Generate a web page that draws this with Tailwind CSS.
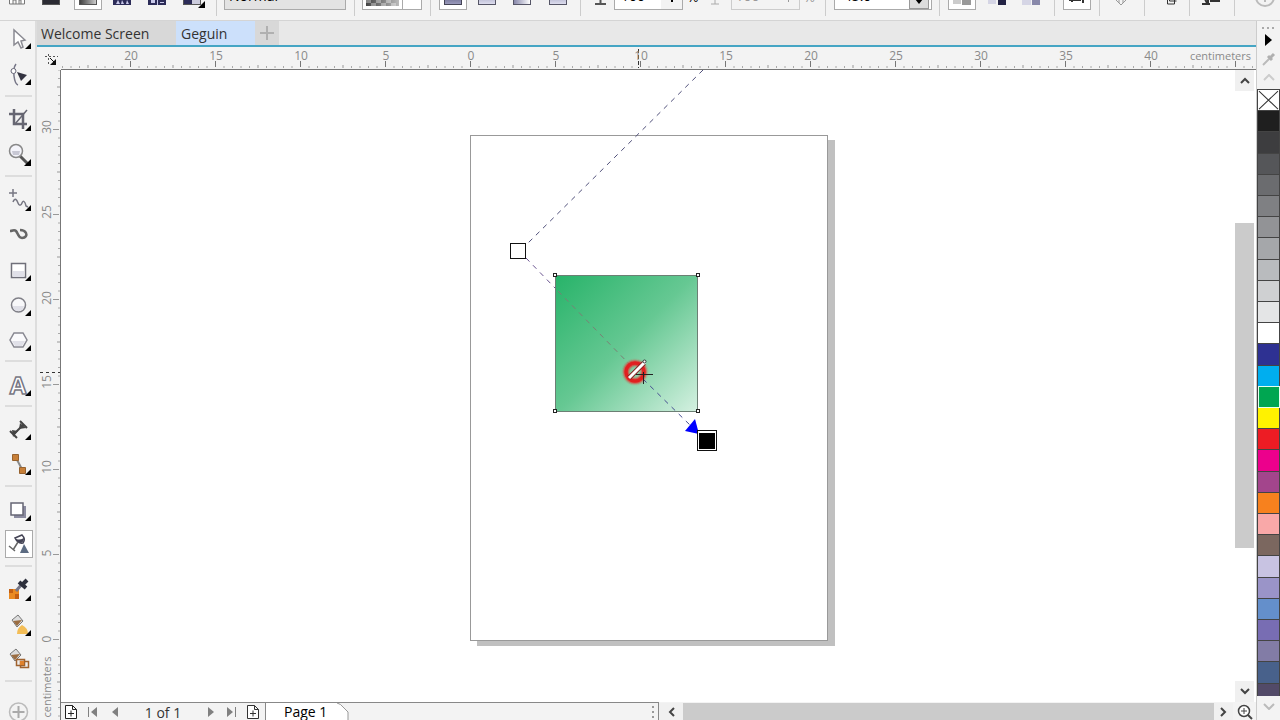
<!DOCTYPE html>
<html lang="en">
<head>
    <meta charset="UTF-8">
    <meta name="viewport" content="width=device-width, initial-scale=1.0">
    <title>Geguin - Drawing Editor</title>
    <script src="https://cdn.jsdelivr.net/npm/@tailwindcss/browser@4"></script>
</head>
<body class="h-screen flex flex-col overflow-hidden bg-[#f3f3f3] text-[#333] text-sm font-['Open_Sans','Noto_Sans',sans-serif]">

    <!-- Property bar, scrolled partly out of view -->
    <header class="h-[21px] shrink-0 overflow-hidden border-b border-[#d4d4d4] flex items-end pb-1">
        <button aria-label="Edit" class="ml-2 mb-[11px]">
            <svg class="block" width="18" height="16"><path d="M1.500 1v14h15V1M5 15v-4h3v4M11 15v-4h2v4" fill="#fff" stroke="#777"/></svg>
        </button>
        <button aria-label="No transparency" class="ml-4 mb-[11px] w-[18px] h-4 bg-[#2b2b33] border border-[#555]"></button>
        <button aria-label="Uniform" class="ml-[14px] mb-1.5 w-[28px] h-6 bg-white border border-[#aaa] px-1 pb-1 flex items-end">
            <span class="block w-[18px] h-4 border border-[#555] bg-linear-to-r from-[#444] to-[#ccc]"></span>
        </button>
        <button aria-label="Vector pattern" class="ml-[11px] mb-[11px]">
            <svg class="block" width="18" height="16"><rect width="18" height="16" fill="#2c2c58"/><path d="M3 15l2-4 2 4zM8 15l1-4 2 4zM13 15l1-4 2 4z" fill="#c9c9ea"/></svg>
        </button>
        <button aria-label="Bitmap pattern" class="ml-[17px] mb-[11px]">
            <svg class="block" width="18" height="16"><rect width="18" height="16" fill="#2c2c58"/><path d="M3 11h4v3H3zM9 11h1v5H9zM12 13h4v1h-4z" fill="#c9c9ea"/></svg>
        </button>
        <button aria-label="Two-color pattern" class="ml-[17px] mb-2">
            <svg class="block" width="22" height="19"><rect x=".5" width="17" height="15.500" fill="#2c2c58" stroke="#555"/><path d="M9 8h8v7H9z" fill="#ccd"/><path d="M22 12v7h-7z"/></svg>
        </button>
        <span class="ml-[11px] w-px h-6 bg-[#ccc]"></span>
        <select aria-label="Merge mode" class="ml-[7px] mb-1.5 w-[122px] h-6 px-1 pb-1 appearance-none bg-[#e3e3e3] border border-[#aaa] text-black text-sm leading-4">
            <option>Normal</option>
        </select>
        <span class="ml-2 w-px h-6 bg-[#ccc]"></span>
        <button aria-label="Transparency picker" class="ml-[7px] mb-1.5 w-[60px] h-6 bg-white border border-[#aaa] flex items-end">
            <svg class="block mb-[3px] ml-[3px]" width="34" height="16">
                <defs><linearGradient id="fade"><stop stop-color="#444"/><stop offset="1" stop-color="#bbb"/></linearGradient></defs>
                <rect width="33" height="16" fill="url(#fade)"/>
                <path d="M5 13h5v3H5zM15 13h5v3h-5zM25 13h5v3h-5zM0 9h5v4H0zM10 9h5v4h-5zM20 9h5v4h-5z" fill="#fff" fill-opacity=".35"/>
            </svg>
            <span class="ml-[2px] w-px h-full bg-[#aaa]"></span>
        </button>
        <span class="ml-2 w-px h-6 bg-[#ccc]"></span>
        <button aria-label="Linear" class="ml-2 mb-1.5 w-[28px] h-6 bg-white border border-[#aaa] px-1 pb-1 flex items-end">
            <span class="block w-[18px] h-4 border border-[#445] bg-linear-to-b from-[#446] to-[#99b]"></span>
        </button>
        <button aria-label="Elliptical" class="ml-[11px] mb-[11px] w-[18px] h-4 border border-[#556] bg-linear-to-b from-[#88a] to-[#dde]"></button>
        <button aria-label="Conical" class="ml-[17px] mb-[11px] w-[18px] h-4 border border-[#556] bg-linear-to-r from-[#88a] to-white"></button>
        <button aria-label="Rectangular" class="ml-[18px] mb-[11px] w-[18px] h-4 border border-[#556] bg-linear-to-b from-[#88a] to-[#dde]"></button>
        <span class="ml-[13px] w-px h-6 bg-[#ccc]"></span>
        <svg class="ml-[14px] mb-[11px]" width="11" height="14"><path d="M5.500 0v13M0 13h11" stroke="#555" stroke-width="2"/></svg>
        <div class="ml-2 mb-1.5 w-[69px] h-6 shrink-0 bg-white border border-[#aaa] flex">
            <input aria-label="Node transparency" value="100" class="w-[46px] pl-[6px] pb-1 text-black text-sm leading-4">
            <span class="w-[21px] bg-[#f3f3f3] flex items-end justify-center pb-[7px]"><span class="w-[2px] h-4 bg-black"></span></span>
        </div>
        <span class="ml-1 mb-[11px] leading-4 text-black">%</span>
        <svg class="ml-3 mb-[11px]" width="8" height="14"><path d="M0 13h8M4 0v13" stroke="#aaa"/></svg>
        <div class="ml-3 mb-1.5 w-[69px] h-6 shrink-0 border border-[#ccc] flex">
            <input aria-label="Midpoint transparency" value="100" disabled class="w-[46px] pl-1 pb-1 text-[#999] text-sm leading-4">
            <span class="w-[21px] flex items-end justify-center pb-[7px]"><span class="w-px h-4 bg-[#999]"></span></span>
        </div>
        <span class="ml-1 mb-[11px] leading-4 text-[#999]">%</span>
        <span class="ml-[10px] w-px h-6 bg-[#ccc]"></span>
        <div class="ml-2 mb-1.5 w-[98px] h-6 bg-white border border-[#aaa] flex">
            <input aria-label="Rotation angle" value="-45.0" class="w-[74px] pl-1 pb-1 text-black text-sm leading-4">
            <button aria-label="Change angle" class="w-5 border border-[#999] bg-[#ddd] flex items-end justify-center pb-1">
                <svg width="8" height="6"><path d="M0 1h8L4 6z"/></svg>
            </button>
        </div>
        <span class="ml-[7px] w-px h-6 bg-[#ccc]"></span>
        <button aria-label="Transparency target all" class="ml-2 mb-1.5 w-[28px] h-6 bg-white border border-[#aaa] px-1 pb-1 flex items-end">
            <svg width="18" height="16"><path d="M0 8h8v7H0z" fill="#ccc"/><path d="M9 6h9v10H9z" fill="#999"/></svg>
        </button>
        <button aria-label="Fill target" class="ml-3 mb-[11px]">
            <svg class="block" width="18" height="16"><path d="M0 8h8v7H0z" fill="#d5d5e5"/><path d="M10 6h8v10h-8z" fill="#224"/></svg>
        </button>
        <button aria-label="Outline target" class="ml-4 mb-[11px]">
            <svg class="block" width="19" height="16"><path d="M0 8h9v8H0z" fill="#d5d5e5"/><path d="M10 6h8v10h-8z" fill="#88a"/></svg>
        </button>
        <span class="ml-[13px] w-px h-6 bg-[#ccc]"></span>
        <button aria-label="Free scale and skew" class="ml-2 mb-1.5 w-[28px] h-6 bg-white border border-[#aaa] px-1 pb-1.5 flex items-end">
            <svg width="18" height="12"><path d="M1 9h12M4 7v4M15 5v7" stroke="#333" stroke-width="2"/></svg>
        </button>
        <span class="ml-2 w-px h-6 bg-[#ccc]"></span>
        <svg class="ml-[15px] mb-[11px]" width="12" height="12"><path d="M1 7l5 5 5-5M4 6v4M8 6v4" fill="none" stroke="#999"/></svg>
        <span class="ml-[17px] w-px h-6 bg-[#ccc]"></span>
        <button aria-label="Copy transparency" class="ml-[21px] mb-[11px]">
            <svg class="block" width="11" height="14"><path d="M3.500 0v10h7M1.500 0v13h7V3" fill="none" stroke="#333"/></svg>
        </button>
        <span class="ml-3 w-px h-6 bg-[#ccc]"></span>
        <button aria-label="Freeze transparency" class="ml-3 mb-[11px]">
            <svg class="block" width="18" height="14"><path d="M0 13h8M8 10h10M3 8l2 4M6 6v7" stroke="#333" stroke-width="2"/></svg>
        </button>
        <span class="ml-[14px] w-px h-6 bg-[#ccc]"></span>
        <button aria-label="Customize" class="ml-5 mb-[9px]">
            <svg class="block" width="20" height="20"><circle cx="10" cy="10" r="9" fill="none" stroke="#bbb" stroke-width="2"/><path d="M10 5v10M5 10h10" stroke="#bbb" stroke-width="2"/></svg>
        </button>
    </header>

    <div class="flex-1 min-h-0 flex">

        <!-- Toolbox -->
        <nav aria-label="Toolbox" class="w-[37px] shrink-0 border-r-2 border-[#ddd] flex flex-col overflow-hidden">
            <button aria-label="Pick" class="h-[35px] shrink-0">
                <svg class="block" width="36" height="35"><path d="M14 9v15l4-3 3 6 2-1-2-6 4-1z" fill="#fff" stroke="#8a8a92" stroke-width="1.500"/><path d="M31 22v6h-6z"/></svg>
            </button>
            <button aria-label="Shape" class="h-[35px] shrink-0">
                <svg class="block" width="36" height="35"><path d="M16 8q-3 4-2 12t4 9" fill="none" stroke="#778" stroke-width="1.500"/><circle cx="13.500" cy="15" r="2.500" fill="#fff" stroke="#667"/><path d="M17 16l10 3-6 6z" fill="#333340"/><path d="M31 23v6h-6z"/></svg>
            </button>
            <span class="my-1 ml-[5px] w-[27px] h-[2px] shrink-0 bg-[#ddd]"></span>
            <button aria-label="Crop" class="h-[35px] shrink-0">
                <svg class="block" width="36" height="35"><path d="M14 8v15h13M9 13h14v15" fill="none" stroke="#666672" stroke-width="2.500"/><path d="M15 23L27 9" stroke="#666672" stroke-width="1.500"/><path d="M31 24v6h-6z"/></svg>
            </button>
            <button aria-label="Zoom" class="h-[35px] shrink-0">
                <svg class="block" width="36" height="35"><path d="M20 20l8 8" stroke="#555" stroke-width="3"/><circle cx="16" cy="15" r="6.500" fill="#f4f4fa" stroke="#888" stroke-width="1.500"/><path d="M12 15h8l-1 4h-6z" fill="#c8c8d4"/><path d="M31 23v7h-7z"/></svg>
            </button>
            <span class="my-1 ml-[5px] w-[27px] h-[2px] shrink-0 bg-[#ddd]"></span>
            <button aria-label="Freehand" class="h-[35px] shrink-0">
                <svg class="block" width="36" height="35"><path d="M13 8v8M9 12h8M13 21c2-5 4-2 5 1s3 3 4 0 3-2 4 3l2 1" fill="none" stroke="#777783" stroke-width="1.500"/><path d="M31 24v6h-6z"/></svg>
            </button>
            <button aria-label="Artistic media" class="h-[35px] shrink-0">
                <svg class="block" width="36" height="35"><path d="M10 15c3 0 4-2 6 0s2 7 6 7 5-3 4-5-4-3-6-3" fill="none" stroke="#666" stroke-width="2.500"/></svg>
            </button>
            <button aria-label="Rectangle" class="h-[35px] shrink-0">
                <svg class="block" width="36" height="35"><rect x="11.500" y="12.500" width="14" height="14" fill="#fff" stroke="#70707a" stroke-width="1.500"/><path d="M13 20h11v6H13z" fill="#e0e0e8"/><path d="M31 24v6h-6z"/></svg>
            </button>
            <button aria-label="Ellipse" class="h-[35px] shrink-0">
                <svg class="block" width="36" height="35"><circle cx="18.500" cy="19" r="7" fill="#f8f8fa" stroke="#808088" stroke-width="1.500"/><path d="M13 20h11q-1 5-6 5t-5-5" fill="#e0e0e8"/><path d="M31 24v6h-6z"/></svg>
            </button>
            <button aria-label="Polygon" class="h-[35px] shrink-0">
                <svg class="block" width="36" height="35"><path d="M14 12h9l4 7-4 7h-9l-4-7z" fill="#fafafc" stroke="#888891" stroke-width="1.500"/><path d="M12 20h13l-3 5h-7z" fill="#e0e0e8"/><path d="M31 24v6h-6z"/></svg>
            </button>
            <span class="my-1 ml-[5px] w-[27px] h-[2px] shrink-0 bg-[#ddd]"></span>
            <button aria-label="Text" class="h-[35px] shrink-0">
                <svg class="block" width="36" height="35"><text x="18" y="28" text-anchor="middle" font-size="24" font-weight="700" fill="#fff" stroke="#777784" stroke-width="1.500">A</text><path d="M31 24v6h-6z"/></svg>
            </button>
            <span class="my-1 ml-[5px] w-[27px] h-[2px] shrink-0 bg-[#ddd]"></span>
            <button aria-label="Dimension" class="h-[35px] shrink-0">
                <svg class="block" width="36" height="35"><path d="M13 24L24 13M10 20l7 7M20 10l7 7" stroke="#444" stroke-width="2"/><path d="M12 19l6 1-5 6zM20 12l6 5-7 1z" fill="#444"/><path d="M31 23v6h-6z"/></svg>
            </button>
            <button aria-label="Connector" class="h-[35px] shrink-0">
                <svg class="block" width="36" height="35"><path d="M16 12l7 13" stroke="#8a8a8a" stroke-width="2"/><path d="M12.500 8.500h6v6h-6zM19.500 21.500h6v6h-6z" fill="#c77f38" stroke="#96622f"/><path d="M31 23v6h-6z"/></svg>
            </button>
            <span class="my-1 ml-[5px] w-[27px] h-[2px] shrink-0 bg-[#ddd]"></span>
            <button aria-label="Drop shadow" class="h-[35px] shrink-0">
                <svg class="block" width="36" height="35"><path d="M14 15h12v12H14z" fill="#8b8ba0"/><rect x="11" y="12" width="12" height="12" fill="#fff" stroke="#666674" stroke-width="1.500"/><path d="M31 24v6h-6z"/></svg>
            </button>
            <button aria-label="Transparency" aria-pressed="true" class="h-[35px] shrink-0">
                <svg class="block" width="36" height="35"><rect x="5.500" y="4.500" width="27" height="27" fill="#fff" stroke="#aaa"/><path d="M15 12l7-3q4 4 1 8-5 1-8-5z" fill="#fff" stroke="#445" stroke-width="1.500"/><path d="M15 12q3 3 9 0 0 4-3 5-4 0-6-5" fill="#445"/><path d="M18 16l-5 8M9 20l6 5" stroke="#666" stroke-width="1.500"/><path d="M24 18l5 9h-9z" fill="#5c6b82"/></svg>
            </button>
            <span class="my-1 ml-[5px] w-[27px] h-[2px] shrink-0 bg-[#ddd]"></span>
            <button aria-label="Color eyedropper" class="h-[35px] shrink-0">
                <svg class="block" width="36" height="35"><path d="M9 18h10v10H9z" fill="#ea8a22"/><path d="M9 18h4v4H9zM15 23h4v5h-4z" fill="#c35f12"/><path d="M16 20l6-7" stroke="#778" stroke-width="3"/><path d="M19 11l7 6M22 14l5-5" stroke="#2d2f3c" stroke-width="4"/><path d="M31 24v6h-6z"/></svg>
            </button>
            <button aria-label="Interactive fill" class="h-[35px] shrink-0">
                <svg class="block" width="36" height="35"><path d="M12 14l6-5 5 6-6 6z" fill="#ddd" stroke="#777"/><path d="M13 15l9-1-5 6z" fill="#9a6d42"/><path d="M22 19q6 3 6 9H17q0-6 5-9z" fill="#f3bd56"/><path d="M31 24v6h-6z"/></svg>
            </button>
            <button aria-label="Smart fill" class="h-[35px] shrink-0">
                <svg class="block" width="36" height="35"><path d="M10 13l6-5 5 6-6 6z" fill="#ddd" stroke="#777"/><path d="M11 14l9-1-5 6z" fill="#9a6d42"/><path d="M16.500 18.500h8v6h-8zM20.500 20.500h8v6h-8z" fill="#eee" stroke="#a0622e" stroke-width="1.500"/><path d="M20 20h4v4h-4z" fill="#e0812c"/></svg>
            </button>
            <span class="my-1 ml-[5px] w-[27px] h-[2px] shrink-0 bg-[#ddd]"></span>
            <button aria-label="Customize toolbox" class="mt-2 h-[35px] shrink-0">
                <svg class="block" width="36" height="35"><circle cx="18.500" cy="18" r="9" fill="none" stroke="#bbb" stroke-width="1.500"/><path d="M18.500 12v12M12.500 18h12" stroke="#aaa" stroke-width="2"/></svg>
            </button>
        </nav>

        <main class="flex-1 min-w-0 flex flex-col">

            <!-- Document tabs -->
            <div role="tablist" class="h-[26px] shrink-0 flex bg-[#e8e8e8] border-b-2 border-[#45a5c4]">
                <button role="tab" class="w-[139px] pl-1 pt-px text-left bg-[#d8d8d8]">Welcome Screen</button>
                <button role="tab" aria-selected="true" class="w-[79px] pl-[5px] pt-px text-left bg-[#cce0fb]">Geguin</button>
                <button aria-label="New document" class="w-6 bg-[#d8d8d8] flex items-center justify-center">
                    <svg width="14" height="14"><path d="M7 0v14M0 7h14" stroke="#b0b0b0" stroke-width="2"/></svg>
                </button>
            </div>

            <!-- Horizontal ruler -->
            <div class="h-[23px] shrink-0 flex">
                <svg class="w-6 h-full shrink-0"><path d="M8 9.500h13M11.500 7v10" stroke="#555" stroke-dasharray="2 2"/><path d="M13 11l5 5" stroke="#111"/><path d="M19 12v6h-6z" fill="#111"/></svg>
                <svg class="flex-1 min-w-0 h-full text-xs" fill="#8a8a8a">
                    <defs>
                        <pattern id="ticks-x" x="-16" width="85" height="23" patternUnits="userSpaceOnUse">
                            <path d="M.500 14v6" stroke="#777"/>
                            <path d="M43 18v3" stroke="#999"/>
                            <path d="M9 19v2M17.500 19v2M26 19v2M34.500 19v2M51.500 19v2M60 19v2M68.500 19v2M77 19v2" stroke="#aaa"/>
                        </pattern>
                    </defs>
                    <rect width="100%" height="22" fill="url(#ticks-x)"/>
                    <path d="M577.500 2v19" stroke="#333" stroke-dasharray="4 2"/>
                    <rect y="22" width="100%" height="1" fill="#777"/>
                    <g text-anchor="middle">
                        <text x="70" y="13">20</text>
                        <text x="155" y="13">15</text>
                        <text x="240" y="13">10</text>
                        <text x="325" y="13">5</text>
                        <text x="410" y="13">0</text>
                        <text x="495" y="13">5</text>
                        <text x="580" y="13">10</text>
                        <text x="665" y="13">15</text>
                        <text x="750" y="13">20</text>
                        <text x="835" y="13">25</text>
                        <text x="920" y="13">30</text>
                        <text x="1005" y="13">35</text>
                        <text x="1090" y="13">40</text>
                    </g>
                    <text class="text-[11px]" x="1190" y="13" text-anchor="end">centimeters</text>
                </svg>
            </div>

            <div class="flex-1 min-h-0 flex">

                <!-- Vertical ruler -->
                <svg class="w-6 h-full shrink-0 text-xs" fill="#8a8a8a">
                    <defs>
                        <pattern id="ticks-y" y="-26" width="24" height="85" patternUnits="userSpaceOnUse">
                            <path d="M16 .500h6" stroke="#999"/>
                            <path d="M20 43h3" stroke="#999"/>
                            <path d="M21 9h2M21 17.500h2M21 26h2M21 34.500h2M21 51.500h2M21 60h2M21 68.500h2M21 77h2" stroke="#aaa"/>
                        </pattern>
                    </defs>
                    <rect width="23" height="100%" fill="url(#ticks-y)"/>
                    <path d="M3 302.500h20" stroke="#333" stroke-dasharray="3 3"/>
                    <rect x="23" width="1" height="100%" fill="#777"/>
                    <g text-anchor="middle">
                        <text transform="translate(14 57) rotate(-90)">30</text>
                        <text transform="translate(14 142) rotate(-90)">25</text>
                        <text transform="translate(14 228) rotate(-90)">20</text>
                        <text transform="translate(14 312) rotate(-90)">15</text>
                        <text transform="translate(14 397) rotate(-90)">10</text>
                        <text transform="translate(14 483) rotate(-90)">5</text>
                        <text transform="translate(14 569) rotate(-90)">0</text>
                        <text class="text-[11px]" transform="translate(14 617) rotate(-90)">centimeters</text>
                    </g>
                </svg>

                <div class="flex-1 min-w-0 flex flex-col">
                    <div class="flex-1 min-h-0 flex bg-white">

                        <!-- Drawing canvas -->
                        <svg class="flex-1 min-w-0 h-full">
                            <defs>
                                <linearGradient id="green-fade" gradientUnits="userSpaceOnUse" x1="457" y1="181" x2="646" y2="371">
                                    <stop stop-color="#10ac5c"/>
                                    <stop offset=".160" stop-color="#27b369"/>
                                    <stop offset=".530" stop-color="#66c893"/>
                                    <stop offset="1" stop-color="#f4fcf7"/>
                                </linearGradient>
                                <filter id="glow" x="-50%" y="-50%" width="200%" height="200%"><feGaussianBlur stdDeviation="1"/></filter>
                            </defs>

                            <path d="M766 70h8v506H416v-6h350z" fill="#c0c0c0"/>
                            <rect x="409.500" y="65.500" width="357" height="505" fill="#fff" stroke="#999"/>

                            <rect x="494.500" y="205.500" width="142" height="136" fill="url(#green-fade)" stroke="#6c7f74"/>
                            <g fill="#fff" stroke="#222">
                                <rect x="492.500" y="203.500" width="3" height="3"/>
                                <rect x="635.500" y="203.500" width="3" height="3"/>
                                <rect x="492.500" y="339.500" width="3" height="3"/>
                                <rect x="635.500" y="339.500" width="3" height="3"/>
                            </g>

                            <!-- Transparency vector and its handles -->
                            <g fill="none" stroke-dasharray="5 5">
                                <path d="M642 0L465 175" stroke="#50507a"/>
                                <path d="M465 188L494 218" stroke="#6a5490"/>
                                <path d="M497 221L576 302" stroke="#7b7f74"/>
                                <path d="M582 309L632 358" stroke="#454c90"/>
                            </g>
                            <rect x="449.500" y="173.500" width="15" height="15" fill="#fff" stroke="#111"/>
                            <path d="M634 349l-10 12 14 3z" fill="#00f"/>
                            <rect x="636.500" y="360.500" width="19" height="20" fill="#fff" stroke="#111"/>
                            <rect x="638" y="363" width="16" height="16"/>

                            <!-- Cursor -->
                            <circle cx="574" cy="302" r="9" fill="none" stroke="#e22" stroke-width="5" filter="url(#glow)"/>
                            <circle cx="574" cy="302" r="9" fill="none" stroke="#e02020" stroke-width="3"/>
                            <path d="M568 308L583 293" stroke="#822" stroke-width="5"/>
                            <path d="M568 308L584 292" stroke="#fff" stroke-width="3"/>
                            <circle cx="583.500" cy="291.500" r="1.500" fill="#fff" stroke="#333"/>
                            <path d="M575 304.500h17M582.500 302v12" stroke="#222"/>
                        </svg>

                        <!-- Vertical scrollbar -->
                        <div class="w-[19px] mr-[2px] shrink-0 flex flex-col bg-white">
                            <button aria-label="Scroll up" class="h-[21px] bg-[#f0f0f0] flex items-center justify-center">
                                <svg width="10" height="7"><path d="M1 6l4-4 4 4" fill="none" stroke="#444" stroke-width="2"/></svg>
                            </button>
                            <div class="flex-1 flex flex-col">
                                <div class="flex-[132]"></div>
                                <div class="flex-[326] bg-[#cbcbcb]"></div>
                                <div class="flex-[133]"></div>
                            </div>
                            <button aria-label="Scroll down" class="h-[21px] bg-[#f0f0f0] flex items-center justify-center">
                                <svg width="10" height="7"><path d="M1 1l4 4 4-4" fill="none" stroke="#444" stroke-width="2"/></svg>
                            </button>
                        </div>
                    </div>

                    <!-- Page navigator and horizontal scrollbar -->
                    <div class="h-[18px] shrink-0 flex">
                        <div class="flex-1 min-w-0 flex items-center border-t border-r border-[#888]">
                            <button aria-label="Add page before" class="ml-1 shrink-0">
                                <svg class="block" width="12" height="14"><path d="M.500.500h7l4 4v9H.500zM7.500.500v4h4M3 8.500h6M6 5.500v6" fill="#fff" stroke="#222"/></svg>
                            </button>
                            <button aria-label="First page" class="ml-[10px] shrink-0"><svg class="block" width="12" height="10" fill="#808080"><path d="M1 0h1v10H1zM10 0v10L4 5z"/></svg></button>
                            <button aria-label="Previous page" class="ml-3 shrink-0"><svg class="block" width="8" height="10" fill="#808080"><path d="M7 0v10L1 5z"/></svg></button>
                            <span class="w-[88px] shrink-0 pt-[3px] text-center">1 of 1</span>
                            <button aria-label="Next page" class="shrink-0"><svg class="block" width="8" height="10" fill="#808080"><path d="M1 0v10l6-5z"/></svg></button>
                            <button aria-label="Last page" class="ml-3 shrink-0"><svg class="block" width="12" height="10" fill="#808080"><path d="M0 0v10l6-5zM8 0h1v10H8z"/></svg></button>
                            <button aria-label="Add page after" class="ml-2 shrink-0">
                                <svg class="block" width="12" height="14"><path d="M.500.500h7l4 4v9H.500zM7.500.500v4h4M3 8.500h6M6 5.500v6" fill="#fff" stroke="#333"/></svg>
                            </button>
                            <button class="ml-1.5 h-full shrink-0 flex items-center border-l border-[#888] bg-white pl-[18px] leading-4 text-black">
                                Page 1
                                <svg class="ml-[10px] self-stretch" width="14" height="18"><path d="M0 0q4 1 6 4l5 5v9h3V0z" fill="#f3f3f3"/><path d="M0 0q4 1 6 4l5 5v9" fill="none" stroke="#999"/></svg>
                            </button>
                            <svg class="ml-auto mr-1 shrink-0" width="2" height="14" fill="#999"><path d="M0 1h2v2H0zM0 6h2v2H0zM0 11h2v2H0z"/></svg>
                        </div>
                        <div class="flex-1 min-w-0 flex pt-px">
                            <button aria-label="Scroll left" class="w-6 shrink-0 bg-[#f0f0f0] flex items-center justify-center">
                                <svg width="7" height="10"><path d="M6 1L2 5l4 4" fill="none" stroke="#444" stroke-width="2"/></svg>
                            </button>
                            <div class="flex-1 bg-[#cbcbcb]"></div>
                            <button aria-label="Scroll right" class="w-[19px] shrink-0 bg-[#f0f0f0] flex items-center justify-center">
                                <svg width="7" height="10"><path d="M1 1l4 4-4 4" fill="none" stroke="#444" stroke-width="2"/></svg>
                            </button>
                            <button aria-label="Navigator" class="w-[23px] shrink-0 flex items-center justify-center">
                                <svg width="16" height="16"><circle cx="7" cy="7" r="5.500" fill="#fff" stroke="#444" stroke-width="1.500"/><path d="M7 4v6M4 7h6" stroke="#444"/><path d="M11 11l4 4" stroke="#444" stroke-width="2"/></svg>
                            </button>
                        </div>
                    </div>
                </div>
            </div>
        </main>

        <!-- Color palette -->
        <aside class="w-6 shrink-0 border-l border-[#ccc] flex flex-col">
            <div class="h-[68px] shrink-0 flex flex-col items-center">
                <svg class="mt-1.5" width="14" height="2" fill="#aaa"><path d="M0 0h2v2H0zM5 0h2v2H5zM10 0h2v2h-2z"/></svg>
                <button aria-label="Palette menu" class="mt-[5px]"><svg class="block" width="7" height="12"><path d="M0 0v12l7-6z"/></svg></button>
                <button aria-label="Eyedropper" class="mt-1.5"><svg class="block" width="14" height="14"><path d="M1 13l7-7" stroke="#bbb" stroke-width="2"/><path d="M6 4l4 4M8 6l4-4" stroke="#b0b0b0" stroke-width="3"/></svg></button>
                <button aria-label="Scroll palette up" class="mt-2"><svg class="block" width="12" height="7"><path d="M1 6l5-5 5 5" fill="none" stroke="#ccc" stroke-width="2"/></svg></button>
            </div>
            <div class="flex-1 min-h-0 flex flex-col border-l border-[#444]">
                <button aria-label="No color" class="grow-[5] basis-0 min-h-0 border-y border-r border-[#444] bg-white">
                    <svg class="block w-full h-full" viewBox="0 0 21 20" preserveAspectRatio="none"><path d="M1 1l19 18M20 1L1 19" stroke="#333"/></svg>
                </button>
                <button aria-label="Black" class="grow-[5] basis-0 min-h-0 border-b border-r border-[#444] bg-[#1f1f1f]"></button>
                <button aria-label="90% Black" class="grow-[5] basis-0 min-h-0 border-b border-r border-[#444] bg-[#3d3d3f]"></button>
                <button aria-label="80% Black" class="grow-[5] basis-0 min-h-0 border-b border-r border-[#444] bg-[#555659]"></button>
                <button aria-label="70% Black" class="grow-[5] basis-0 min-h-0 border-b border-r border-[#444] bg-[#6b6c6f]"></button>
                <button aria-label="60% Black" class="grow-[5] basis-0 min-h-0 border-b border-r border-[#444] bg-[#7f8083]"></button>
                <button aria-label="50% Black" class="grow-[5] basis-0 min-h-0 border-b border-r border-[#444] bg-[#929396]"></button>
                <button aria-label="40% Black" class="grow-[5] basis-0 min-h-0 border-b border-r border-[#444] bg-[#a5a7aa]"></button>
                <button aria-label="30% Black" class="grow-[5] basis-0 min-h-0 border-b border-r border-[#444] bg-[#b9bbbe]"></button>
                <button aria-label="20% Black" class="grow-[5] basis-0 min-h-0 border-b border-r border-[#444] bg-[#cfd0d2]"></button>
                <button aria-label="10% Black" class="grow-[5] basis-0 min-h-0 border-b border-r border-[#444] bg-[#e4e5e6]"></button>
                <button aria-label="White" class="grow-[5] basis-0 min-h-0 border-b border-r border-[#444] bg-white"></button>
                <button aria-label="Blue" class="grow-[5] basis-0 min-h-0 border-b border-r border-[#444] bg-[#2e3192]"></button>
                <button aria-label="Cyan" class="grow-[5] basis-0 min-h-0 border-r border-[#444] bg-[#00aeef]"></button>
                <button aria-label="Green" aria-pressed="true" class="grow-[5] basis-0 min-h-0 border border-[#e6fff0] bg-[#00a651]"></button>
                <button aria-label="Yellow" class="grow-[5] basis-0 min-h-0 border-b border-r border-[#444] bg-[#fff200]"></button>
                <button aria-label="Red" class="grow-[5] basis-0 min-h-0 border-b border-r border-[#444] bg-[#ed1c24]"></button>
                <button aria-label="Magenta" class="grow-[5] basis-0 min-h-0 border-b border-r border-[#444] bg-[#ec008c]"></button>
                <button aria-label="Purple" class="grow-[5] basis-0 min-h-0 border-b border-r border-[#444] bg-[#a3458c]"></button>
                <button aria-label="Orange" class="grow-[5] basis-0 min-h-0 border-b border-r border-[#444] bg-[#f7811e]"></button>
                <button aria-label="Pink" class="grow-[5] basis-0 min-h-0 border-b border-r border-[#444] bg-[#f9a8a8]"></button>
                <button aria-label="Dark brown" class="grow-[5] basis-0 min-h-0 border-b border-r border-[#444] bg-[#7b675f]"></button>
                <button aria-label="Powder blue" class="grow-[5] basis-0 min-h-0 border-b border-r border-[#444] bg-[#c8c3e2]"></button>
                <button aria-label="Pastel blue" class="grow-[5] basis-0 min-h-0 border-b border-r border-[#444] bg-[#9a94c8]"></button>
                <button aria-label="Baby blue" class="grow-[5] basis-0 min-h-0 border-b border-r border-[#444] bg-[#648fcb]"></button>
                <button aria-label="Electric blue" class="grow-[5] basis-0 min-h-0 border-b border-r border-[#444] bg-[#786db3]"></button>
                <button aria-label="Twilight blue" class="grow-[5] basis-0 min-h-0 border-b border-r border-[#444] bg-[#827ca6]"></button>
                <button aria-label="Navy blue" class="grow-[5] basis-0 min-h-0 border-b border-r border-[#444] bg-[#48618b]"></button>
                <button aria-label="Deep navy blue" class="grow-[3] basis-0 min-h-0 border-r border-[#444] bg-[#524a68]"></button>
            </div>
            <button aria-label="Scroll palette down" class="h-6 shrink-0 flex justify-center pt-[7px]">
                <svg width="12" height="7"><path d="M1 1l5 5 5-5" fill="none" stroke="#bbb" stroke-width="2"/></svg>
            </button>
        </aside>
    </div>
</body>
</html>
